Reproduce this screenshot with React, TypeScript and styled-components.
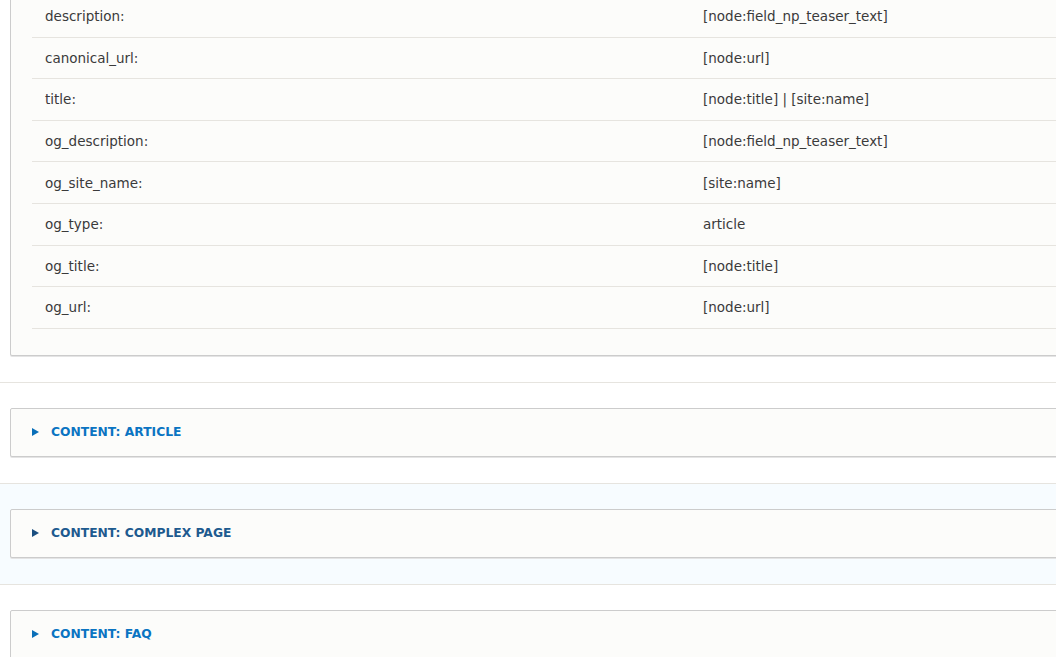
import React from "react";
import styled, { createGlobalStyle } from "styled-components";

const GlobalStyle = createGlobalStyle`
  html, body {
    margin: 0;
    padding: 0;
    background: #ffffff;
    overflow: hidden;
  }
  body {
    font-family: "DejaVu Sans", "Liberation Sans", sans-serif;
    color: #333333;
  }
`;

const Page = styled.div`
  display: flex;
  flex-direction: column;
  width: 1120px;
  height: 657px;
  overflow: hidden;
`;

const Section = styled.div<{ $hover?: boolean; $first?: boolean }>`
  display: flex;
  flex-direction: column;
  padding: ${(p) => (p.$first ? "0" : "25px")} 0 26px 10px;
  border-bottom: 1px solid #e6e4df;
  background: ${(p) => (p.$hover ? "#f7fcff" : "#ffffff")};
  flex-shrink: 0;
`;

const Box = styled.div<{ $first?: boolean }>`
  display: flex;
  flex-direction: column;
  border: 1px solid #cccccc;
  border-radius: 2px;
  background: #fcfcfa;
  box-shadow: 0 1px 0 #e4e4e4;
  margin-top: ${(p) => (p.$first ? "-5px" : "0")};
`;

const BoxBody = styled.div`
  display: flex;
  flex-direction: column;
  padding: 0 0 26px 21px;
`;

const MetaRow = styled.div`
  display: flex;
  align-items: center;
  height: 41.6px;
  box-sizing: border-box;
  border-bottom: 1px solid #e6e4df;
  font-size: 13.5px;
  color: #3a3a3a;
`;

const LabelCell = styled.div`
  width: 658px;
  padding-left: 13px;
  box-sizing: border-box;
  flex-shrink: 0;
`;

const ValueCell = styled.div`
  padding-left: 13px;
`;

const Summary = styled.div<{ $dark?: boolean }>`
  display: flex;
  align-items: center;
  height: 47px;
  padding-left: 21px;
  font-size: 12.3px;
  font-weight: bold;
  text-transform: uppercase;
  color: ${(p) => (p.$dark ? "#1d5a8f" : "#0a74c2")};
`;

const Arrow = styled.span<{ $dark?: boolean }>`
  display: inline-block;
  width: 0;
  height: 0;
  border-top: 4px solid transparent;
  border-bottom: 4px solid transparent;
  border-left: 7px solid ${(p) => (p.$dark ? "#1b4f80" : "#0a6fb8")};
  margin-right: 12px;
`;

const rows: [string, string][] = [
  ["description:", "[node:field_np_teaser_text]"],
  ["canonical_url:", "[node:url]"],
  ["title:", "[node:title] | [site:name]"],
  ["og_description:", "[node:field_np_teaser_text]"],
  ["og_site_name:", "[site:name]"],
  ["og_type:", "article"],
  ["og_title:", "[node:title]"],
  ["og_url:", "[node:url]"],
];

const sections = [
  { title: "Content: Article", hover: false },
  { title: "Content: Complex page", hover: true },
  { title: "Content: FAQ", hover: false },
];

export default function App() {
  return (
    <>
      <GlobalStyle />
      <Page>
        <Section $first>
          <Box $first>
            <BoxBody>
              {rows.map(([k, v]) => (
                <MetaRow key={k}>
                  <LabelCell>{k}</LabelCell>
                  <ValueCell>{v}</ValueCell>
                </MetaRow>
              ))}
            </BoxBody>
          </Box>
        </Section>
        {sections.map((s) => (
          <Section key={s.title} $hover={s.hover}>
            <Box>
              <Summary $dark={s.hover}>
                <Arrow $dark={s.hover} />
                {s.title}
              </Summary>
            </Box>
          </Section>
        ))}
      </Page>
    </>
  );
}
